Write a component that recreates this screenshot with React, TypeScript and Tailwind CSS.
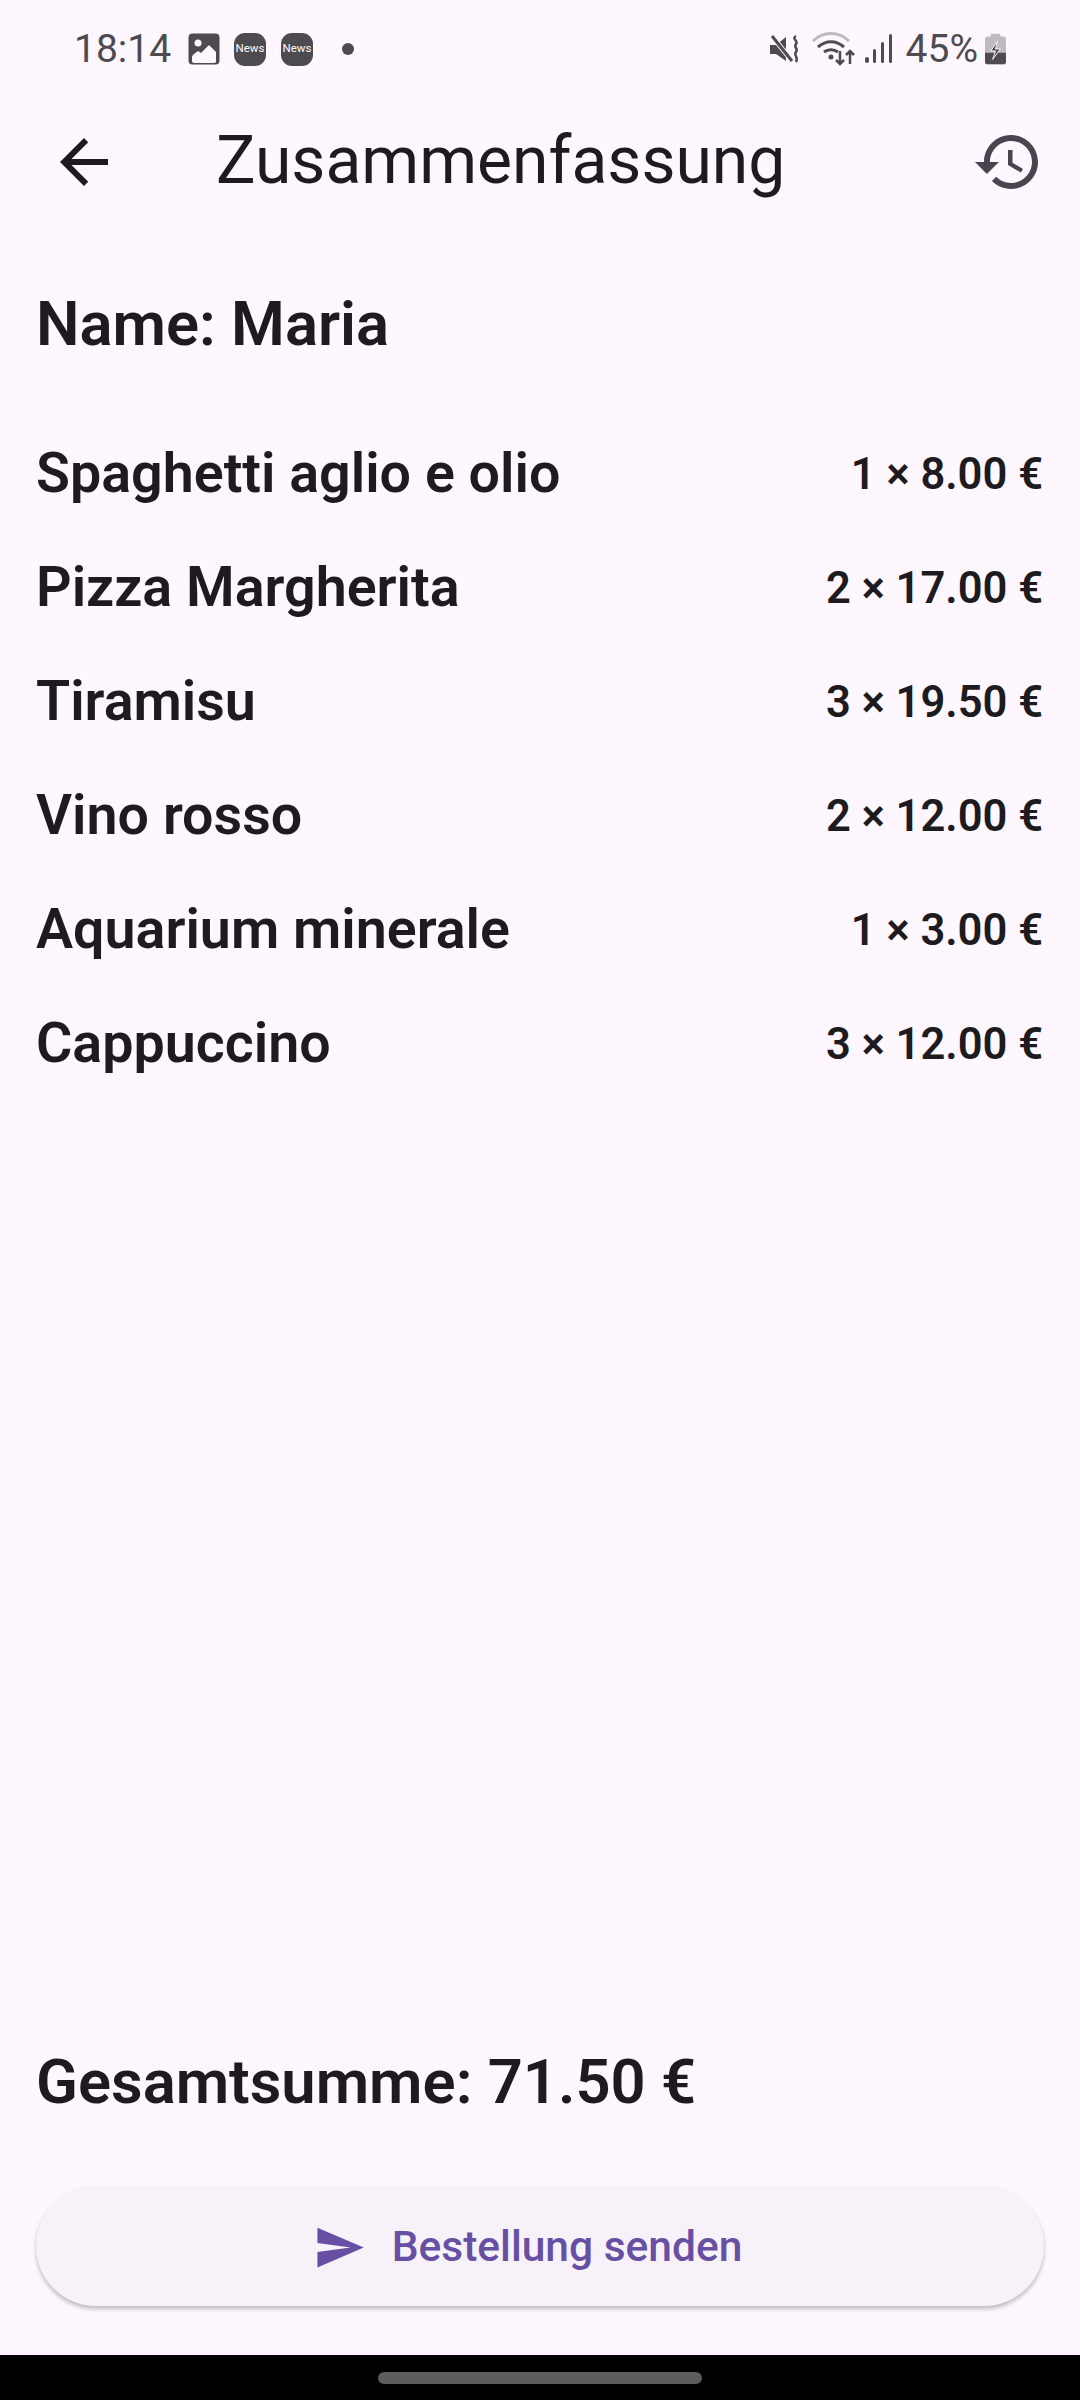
const items = [
  { name: "Spaghetti aglio e olio", price: "1 × 8.00 €" },
  { name: "Pizza Margherita", price: "2 × 17.00 €" },
  { name: "Tiramisu", price: "3 × 19.50 €" },
  { name: "Vino rosso", price: "2 × 12.00 €" },
  { name: "Aquarium minerale", price: "1 × 3.00 €" },
  { name: "Cappuccino", price: "3 × 12.00 €" },
];

const StatusBar = () => {
  return (
    <div className="flex h-[88px] items-start justify-between pt-[31px] pl-[74px] pr-[74px] text-[#49454f]">
      <div className="flex h-[36px] items-center">
        <span className="w-[114px] text-[39px] leading-none text-[#4d4b50]">18:14</span>
        <svg className="h-[32px] w-[32px]" viewBox="0 0 32 32">
          <rect width="31" height="31" x="0.5" y="0.5" rx="4" fill="#4d4b50" />
          <circle cx="10" cy="10" r="3.5" fill="#fdf7ff" />
          <path d="M4 24c0-1 1-2 2-3l4-3 3 2 8-8 7 7v10a2 2 0 0 1-2 1H6a2 2 0 0 1-2-2z" fill="#fdf7ff" />
        </svg>
        <span className="ml-[14px] flex h-[33px] w-[32px] items-center justify-center rounded-[11px] bg-[#4d4b50] text-[11.5px] leading-none text-white">News</span>
        <span className="ml-[15px] flex h-[33px] w-[32px] items-center justify-center rounded-[11px] bg-[#4d4b50] text-[11.5px] leading-none text-white">News</span>
        <span className="ml-[29px] h-[12px] w-[12px] rounded-full bg-[#4d4b50]" />
      </div>
      <div className="flex h-[36px] items-center">
        <svg className="h-[30px] w-[30px]" viewBox="0 0 30 30" fill="none">
          <path d="M0 11h6l10-8v24L6 20H0z" fill="#4d4b50" />
          <path d="M2 2l20 25" stroke="#fdf7ff" strokeWidth="5" />
          <path d="M2 2l20 25" stroke="#4d4b50" strokeWidth="3" />
          <path d="M26 2c-5 3 3 5 0 8s3 5 0 8 3 5 0 10" stroke="#4d4b50" strokeWidth="2.5" />
        </svg>
        <svg className="ml-[12px] h-[34px] w-[44px]" viewBox="0 0 44 34" fill="none">
          <path d="M1 9c10-10 26-10 36 0" stroke="#bdbbc0" strokeWidth="3" />
          <path d="M6 15c8-7 18-7 26 0" stroke="#4d4b50" strokeWidth="3" />
          <path d="M12 20c4-3 10-3 14 0" stroke="#4d4b50" strokeWidth="3" />
          <circle cx="19" cy="25" r="2.5" fill="#4d4b50" />
          <path d="M28 19v13m-4-4l4 4 4-4M38 32V19m-4 4l4-4 4 4" stroke="#4d4b50" strokeWidth="2.5" />
        </svg>
        <svg className="ml-[9px] h-[30px] w-[28px]" viewBox="0 0 28 30" fill="#4d4b50">
          <rect x="0" y="23" width="4" height="6" rx="2" />
          <rect x="8" y="15" width="3" height="14" rx="1.5" />
          <rect x="16" y="8" width="3" height="21" rx="1.5" />
          <rect x="24" y="0" width="3" height="29" rx="1.5" />
        </svg>
        <span className="ml-[13px] text-[39px] leading-none text-[#4d4b50]">45%</span>
        <svg className="ml-[7px] h-[32px] w-[21px]" viewBox="0 0 22 32">
          <path d="M6 0h10v3h3a3 3 0 0 1 3 3v23a3 3 0 0 1-3 3H3a3 3 0 0 1-3-3V6a3 3 0 0 1 3-3h3z" fill="#bdbbc0" />
          <path d="M0 20h22v9a3 3 0 0 1-3 3H3a3 3 0 0 1-3-3z" fill="#4d4b50" />
          <path d="M13 8l-7 10h5l-3 9 8-11h-5z" fill="#4d4b50" stroke="#fdf7ff" strokeWidth="1" />
        </svg>
      </div>
    </div>
  );
};

const App = () => {
  return (
    <div className="flex h-[2400px] w-[1080px] flex-col bg-[#fef7ff] font-['Roboto',sans-serif] text-[#1d1b20]">
      <StatusBar />

      {/* Toolbar */}
      <div className="flex h-[147px] items-center pl-[48px] pr-[36px]">
        <svg className="h-[72px] w-[72px]" viewBox="0 0 24 24" fill="#1d1b20">
          <path d="M20 11H7.83l5.59-5.59L12 4l-8 8 8 8 1.41-1.41L7.83 13H20v-2z" />
        </svg>
        <h1 className="mb-[2px] ml-[96px] text-[66px] leading-none font-normal">Zusammenfassung</h1>
        <svg className="ml-auto h-[72px] w-[72px]" viewBox="0 0 24 24" fill="#49454f">
          <path d="M13 3c-4.97 0-9 4.03-9 9H1l3.89 3.89.07.14L9 12H6c0-3.87 3.13-7 7-7s7 3.13 7 7-3.13 7-7 7c-1.93 0-3.68-.79-4.94-2.06l-1.42 1.42C8.27 19.99 10.51 21 13 21c4.97 0 9-4.03 9-9s-4.03-9-9-9zm-1 5v5l4.28 2.54.72-1.21-3.5-2.08V8H12z" />
        </svg>
      </div>

      {/* Content */}
      <div className="flex flex-1 flex-col px-[36px]">
        <div className="mt-[47px] text-[61.5px] leading-[84px] font-semibold">Name: Maria</div>
        <div className="mt-[52px] flex flex-col">
          {items.map((item) => (
            <div key={item.name} className="flex h-[114px] items-center justify-between pr-[1px]">
              <span className="mb-[2px] text-[55.6px] font-semibold">{item.name}</span>
              <span className="text-[43.5px] font-semibold">{item.price}</span>
            </div>
          ))}
        </div>
        <div className="mt-auto text-[61.5px] leading-[84px] font-semibold">Gesamtsumme: 71.50 €</div>
        <button className="mt-[62px] mb-[49px] flex h-[120px] w-[1008px] items-center justify-center rounded-full bg-[#f7f2fa] pt-[2px] pr-[25px] text-[42.5px] font-medium text-[#6750a4] shadow-[0_3px_4px_rgba(0,0,0,0.25)]">
          <svg className="mr-[26px] h-[53px] w-[53px]" viewBox="0 0 24 24" fill="#6750a4">
            <path d="M2.01 21L23 12 2.01 3 2 10l15 2-15 2z" />
          </svg>
          Bestellung senden
        </button>
      </div>

      {/* Nav bar */}
      <div className="flex h-[45px] items-start justify-center bg-black pt-[17px]">
        <div className="h-[12px] w-[324px] rounded-full bg-[#5c5c5c]" />
      </div>
    </div>
  );
};

export default App;
